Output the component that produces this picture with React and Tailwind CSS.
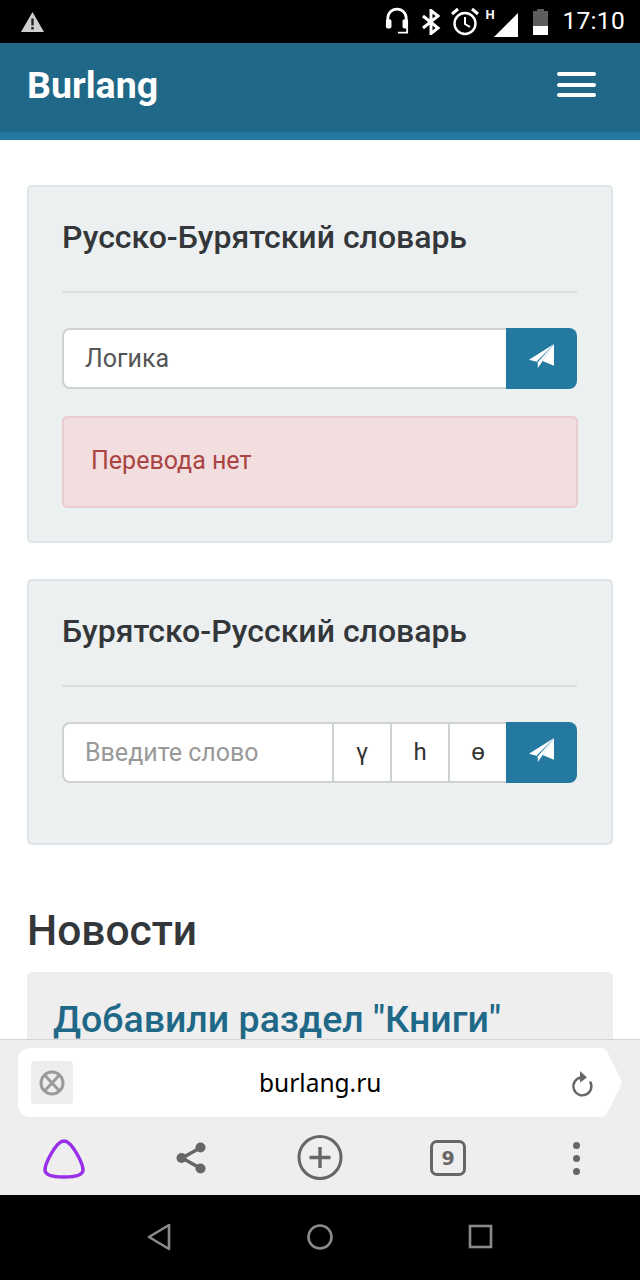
import React from 'react';

function PlaneIcon() {
  return (
    <svg className="-mt-[6px] h-[24px] w-[25px]" viewBox="0 0 25 24" fill="#fff">
      <path d="M25 0 0 15.700l7.500 2z" />
      <path d="M25 0 8.800 18.300V24l3.500-5z" />
      <path d="M25 0 13.500 17 25 21.700z" />
    </svg>
  );
}

function StatusBar() {
  return (
    <div className="h-[43px] shrink-0 bg-black flex items-center pl-[21px] pr-[15px] text-white">
      <svg className="h-[20px] w-[23px]" viewBox="0 0 23 20">
        <path d="M11.5 0 23 20H0z" fill="#cfcfcf" />
        <path d="M10.3 6.5h2.4v7h-2.4zm0 8.5h2.4v2.4h-2.4z" fill="#222" />
      </svg>
      <div className="ml-auto flex items-center">
        <svg className="h-[29px] w-[24px]" viewBox="0 0 26 29" fill="none" stroke="#fff">
          <path d="M3 19V11a10 10 0 0 1 20 0v8" strokeWidth="3" />
          <rect x="1" y="12" width="6" height="10" rx="2" fill="#fff" strokeWidth="0" />
          <rect x="19" y="12" width="6" height="10" rx="2" fill="#fff" strokeWidth="0" />
          <path d="M24 21v5.500H14" strokeWidth="2" />
        </svg>
        <svg className="ml-[12px] h-[26px] w-[20px]" viewBox="0 0 20 26" fill="none" stroke="#fff" strokeWidth="3">
          <path d="m2 7 15 12-7 5.500V1.500l7 5.500L2 19" />
        </svg>
        <svg className="ml-[9px] h-[30px] w-[30px]" viewBox="0 0 30 30" fill="none" stroke="#fff">
          <circle cx="15" cy="16.500" r="10.500" strokeWidth="2.400" />
          <path d="M15 10v7l5 3" strokeWidth="2" />
          <path d="m2 7 6-5M28 7l-6-5" strokeWidth="3" />
        </svg>
        <div className="ml-[5px] flex items-start h-[28px]">
          <span className="text-[13px] font-bold leading-[14px] w-[9px]">H</span>
          <svg className="mt-[5px] h-[24px] w-[24px]" viewBox="0 0 24 24" fill="#fff">
            <path d="M24 0v24H0z" />
          </svg>
        </div>
        <div className="ml-[15px] w-[15px] h-[26px] flex flex-col items-center">
          <div className="w-[7px] h-[2px] bg-[#5d5d5d]" />
          <div className="w-full h-[15px] bg-[#5d5d5d]" />
          <div className="w-full h-[9px] bg-white" />
        </div>
        <span className="ml-[14px] text-[24.500px] leading-none tracking-[0.3px]">17:10</span>
      </div>
    </div>
  );
}

function Navbar() {
  return (
    <div className="h-[97px] shrink-0 bg-[#1f6888] border-b-[8px] border-[#2479a0] flex items-center justify-between pl-[27px] pr-[44px]">
      <span className="text-white text-[37.500px] font-bold leading-none -mt-[3px]">Burlang</span>
      <div className="w-[39px] flex flex-col gap-[6.500px] -mt-[6px]">
        <div className="h-[4px] rounded bg-white" />
        <div className="h-[4px] rounded bg-white" />
        <div className="h-[4px] rounded bg-white" />
      </div>
    </div>
  );
}

function Card({ title, className, children }) {
  return (
    <div className={`bg-[#ecf0f1] border-2 border-[#dde4e8] rounded-[5px] pl-[33px] pr-[34px] pt-[30px] ${className}`}>
      <h2 className="text-[32px] leading-[40px] font-medium text-[#33373a]">{title}</h2>
      <div className="mt-[34px] mb-[35px] h-[2px] bg-[#dcdfe0]" />
      {children}
    </div>
  );
}

function BrowserBar() {
  return (
    <div className="h-[156px] shrink-0 bg-[#eeeeee] border-t border-[#d6d6d6] pt-[8px] relative">
      <div className="ml-[18px] w-[604px] h-[69px] flex items-center relative">
        <div className="absolute inset-y-0 left-0 right-[18px] bg-white rounded-l-[12px]" />
        <svg className="absolute right-0 top-0 h-[69px] w-[24px]" viewBox="0 0 24 69" fill="#fff">
          <path d="M0 0h3q4 0 6 3.500l14 28q1.500 3 0 6l-14 28Q7 69 3 69H0z" />
        </svg>
        <div className="relative ml-[13px] w-[42px] h-[43px] bg-[#eeeeee] rounded-[4px] flex items-center justify-center">
          <svg className="h-[26px] w-[26px]" viewBox="0 0 26 26" fill="none" stroke="#9a9a9a" strokeWidth="3">
            <circle cx="13" cy="13" r="11" />
            <path d="m5.500 5 15 16M20.500 5l-15 16" />
          </svg>
        </div>
        <span className="absolute left-[241px] top-[19px] text-[24.500px] leading-[32px] text-black font-['Noto_Sans',sans-serif]">burlang.ru</span>
        <svg className="absolute left-[550px] top-[22px] h-[28px] w-[26px]" viewBox="0 0 26 28" fill="none" stroke="#666" strokeWidth="2.400">
          <path d="M12.500 7.500a9 9 0 1 0 9.500 4" />
          <path d="m12 1 7 6.500-7 5z" fill="#666" strokeWidth="0" />
        </svg>
      </div>
      <div className="mt-[16px] h-[50px] relative">
        <svg className="absolute left-[43px] top-[6px] h-[40px] w-[42px]" viewBox="0 0 42 40" fill="none" stroke="#9a2ee8" strokeWidth="3.500">
          <path d="M21 2C26 2 30 8 34 15c4 7 6 12 6 16 0 5-8 7-19 7S2 36 2 31c0-4 2-9 6-16C12 8 16 2 21 2z" />
        </svg>
        <svg className="absolute left-[175px] top-[8px] h-[34px] w-[32px]" viewBox="0 0 32 34" fill="#666" stroke="#666">
          <path d="M25 7 7 17l18 10" fill="none" strokeWidth="3.400" />
          <circle cx="25.500" cy="6.500" r="5" strokeWidth="0" />
          <circle cx="6.500" cy="17" r="5" strokeWidth="0" />
          <circle cx="25.500" cy="27.500" r="5" strokeWidth="0" />
        </svg>
        <svg className="absolute left-[297px] top-[2px] h-[45px] w-[46px]" viewBox="0 0 46 45" fill="none" stroke="#666">
          <circle cx="23" cy="22.500" r="21" strokeWidth="3" />
          <path d="M23 12v21M12.500 22.500h21" strokeWidth="3.400" />
        </svg>
        <div className="absolute left-[430px] top-[7px] h-[36px] w-[36px] border-[3.500px] border-[#666] rounded-[7px] flex items-center justify-center text-[#666] text-[19px] font-bold font-['DejaVu_Sans',sans-serif] leading-none">9</div>
        <div className="absolute left-[573px] top-[9px] flex flex-col gap-[6px]">
          <div className="h-[7px] w-[7px] rounded-full bg-[#666]" />
          <div className="h-[7px] w-[7px] rounded-full bg-[#666]" />
          <div className="h-[7px] w-[7px] rounded-full bg-[#666]" />
        </div>
      </div>
    </div>
  );
}

function NavButtons() {
  return (
    <div className="h-[85px] shrink-0 bg-black flex items-center justify-center gap-[135px] pb-[2px]">
      <svg className="h-[28px] w-[25px]" viewBox="0 0 25 28" fill="none" stroke="#8a8a8a" strokeWidth="2.600" strokeLinejoin="round">
        <path d="M22 2v24L2 14z" />
      </svg>
      <svg className="h-[26px] w-[26px]" viewBox="0 0 26 26" fill="none" stroke="#8a8a8a" strokeWidth="2.600">
        <circle cx="13" cy="13" r="11.500" />
      </svg>
      <svg className="h-[25px] w-[25px]" viewBox="0 0 25 25" fill="none" stroke="#8a8a8a" strokeWidth="2.600">
        <rect x="2" y="2" width="21" height="21" />
      </svg>
    </div>
  );
}

export default function App() {
  return (
    <div className="h-[1280px] w-[640px] flex flex-col overflow-hidden bg-white font-['Roboto',sans-serif]">
      <StatusBar />
      <Navbar />

      <div className="flex-1 min-h-0 overflow-hidden px-[27px] pt-[45px]">
        <Card title="Русско-Бурятский словарь" className="pb-[33px]">
          <div className="flex h-[61px]">
            <input
              readOnly
              value="Логика"
              className="flex-1 min-w-0 bg-white border-2 border-r-0 border-[#cfd2d3] rounded-l-[8px] pl-[21px] text-[25px] text-[#555] outline-none"
            />
            <button className="w-[71px] bg-[#2479a0] rounded-r-[8px] flex items-center justify-center">
              <PlaneIcon />
            </button>
          </div>
          <div className="mt-[27px] -mr-[1px] h-[92px] bg-[#f2dede] border-2 border-[#ebccd1] rounded-[5px] flex items-center pl-[27px] pb-[2px] text-[25px] text-[#a94442]">
            Перевода нет
          </div>
        </Card>

        <Card title="Бурятско-Русский словарь" className="mt-[36px] pb-[60px]">
          <div className="flex h-[61px]">
            <input
              readOnly
              placeholder="Введите слово"
              className="flex-1 min-w-0 bg-white border-2 border-r-0 border-[#cfd2d3] rounded-l-[8px] pl-[21px] text-[25px] placeholder:text-[#999] outline-none"
            />
            {['γ', 'h', 'ө'].map((ch) => (
              <div
                key={ch}
                className="w-[58px] bg-white border-y-2 border-l-2 border-[#cfd2d3] flex items-center justify-center pb-[2px] text-[24px] text-[#333]"
              >
                {ch}
              </div>
            ))}
            <button className="w-[71px] bg-[#2479a0] rounded-r-[8px] flex items-center justify-center">
              <PlaneIcon />
            </button>
          </div>
        </Card>

        <h2 className="mt-[61px] text-[42.500px] leading-[50px] font-medium text-[#33373a]">Новости</h2>
        <div className="mt-[16px] bg-[#eeeeee] rounded-[5px] pl-[26px] pt-[24px] h-[200px]">
          <div className="text-[37.500px] leading-[46px] font-medium text-[#1f6888]">Добавили раздел "Книги"</div>
        </div>
      </div>

      <BrowserBar />
      <NavButtons />
    </div>
  );
}
